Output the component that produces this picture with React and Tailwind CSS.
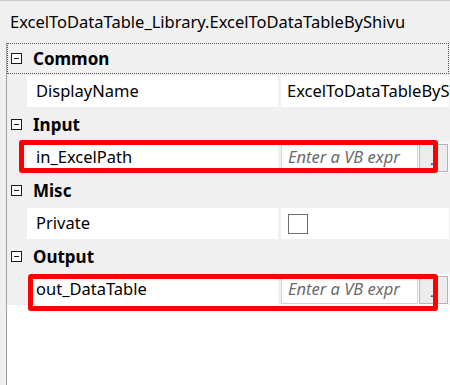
const font = { fontFamily: '"Noto Sans", "Open Sans", sans-serif' };

function MinusBox() {
  return (
    <span className="relative flex h-[11px] w-[11px] shrink-0 items-center justify-center border border-[#1a1a1a] bg-white">
      <span className="h-px w-[5px] bg-[#1a1a1a]" />
    </span>
  );
}

function Category({ label, focused }) {
  return (
    <div
      className={
        "flex h-[31px] items-center gap-[11px] pl-[4px] " +
        (focused ? "outline outline-1 outline-dotted outline-offset-[-1px] outline-[#555]" : "")
      }
    >
      <MinusBox />
      <span className="text-[17px] font-bold text-black">{label}</span>
    </div>
  );
}

function ExprBox() {
  return (
    <div className="flex h-full items-center gap-[1px] py-[1px]">
      <div className="flex h-full w-[137px] items-center overflow-hidden border border-[#d4d4d4] bg-white pl-[6px]">
        <span className="whitespace-nowrap text-[16.5px] italic text-[#6b6b6b]">Enter a VB expr</span>
      </div>
      <div className="flex h-[28px] w-[29px] items-end justify-center border border-[#b5b5b5] bg-[#ececec] pb-[4px] text-[12px] leading-none text-black">
        ..
      </div>
    </div>
  );
}

function PropRow({ label, children }) {
  return (
    <div className="flex h-[31px]">
      <div className="w-[20px] shrink-0" />
      <div className="flex w-[251px] shrink-0 items-center bg-white pl-[9px]">
        <span className="text-[16.5px] text-black">{label}</span>
      </div>
      <div className="w-[3px] shrink-0" />
      <div className="flex min-w-0 flex-1 items-center overflow-hidden bg-white">{children}</div>
    </div>
  );
}

export default function App() {
  return (
    <div className="relative h-[385px] w-[450px] overflow-hidden bg-[#f0f0f0]" style={font}>
      <div className="h-px bg-[#c9c9c9]" />
      <div className="flex h-[42px] items-center pl-[10px]">
        <span className="whitespace-nowrap text-[16.5px] text-black">
          ExcelToDataTable_Library.ExcelToDataTableByShivu
        </span>
      </div>
      <div className="ml-[6px] flex h-[342px] border-l border-[#a0a0a0]">
        <div className="flex w-full flex-col">
          <div className="flex flex-col gap-[2px] pr-[1px]">
            <Category label="Common" focused />
            <PropRow label="DisplayName">
              <span className="whitespace-nowrap pl-[6px] text-[16.5px] text-black">ExcelToDataTableByS</span>
            </PropRow>
            <Category label="Input" />
            <PropRow label="in_ExcelPath">
              <ExprBox />
            </PropRow>
            <Category label="Misc" />
            <PropRow label="Private">
              <span className="ml-[7px] h-[20px] w-[20px] border border-[#6f6f6f] bg-white" />
            </PropRow>
            <Category label="Output" />
            <PropRow label="out_DataTable">
              <ExprBox />
            </PropRow>
          </div>
          <div className="flex-1 bg-white" />
        </div>
      </div>

      <div className="absolute left-[19px] top-[140px] h-[33px] w-[419px] rounded-[3px] border-[5px] border-[#ff0000]" />
      <div className="absolute left-[28px] top-[274px] h-[37px] w-[410px] rounded-[3px] border-[5px] border-[#ff0000]" />
    </div>
  );
}
